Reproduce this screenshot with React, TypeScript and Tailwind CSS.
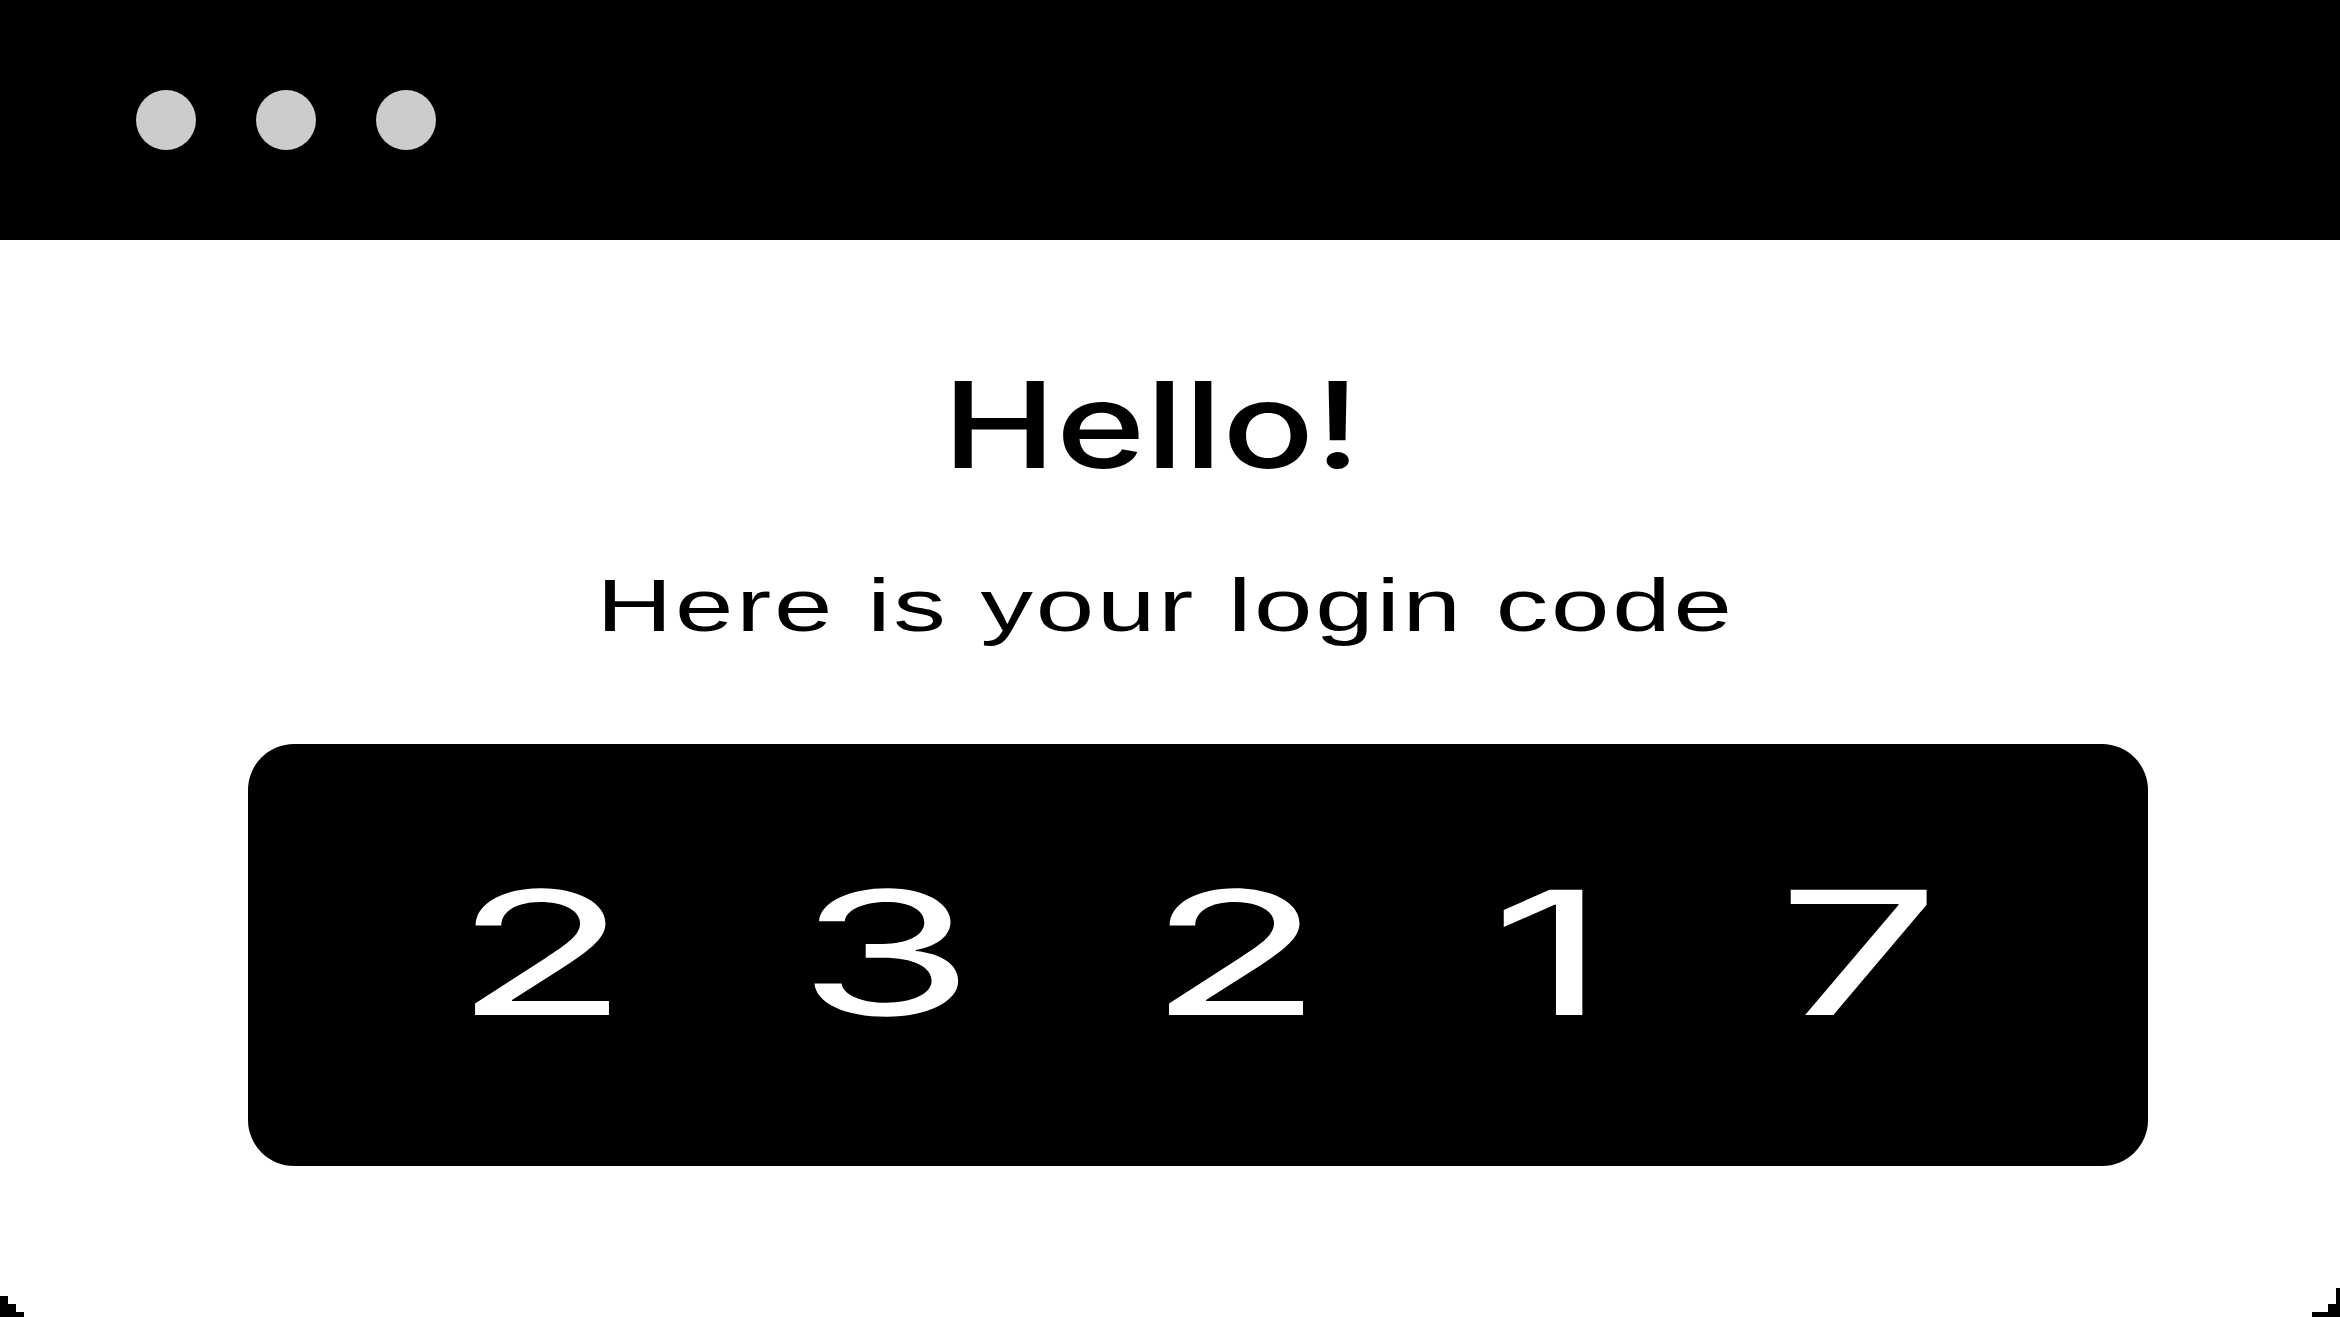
import React from 'react';

const digits = [
  { d: '2', w: 'w-[138px]', ml: 'ml-[224px]' },
  { d: '3', w: 'w-[142px]', ml: 'ml-[205px]' },
  { d: '2', w: 'w-[138px]', ml: 'ml-[209px]' },
  { d: '1', w: 'w-[75px]', ml: 'ml-[207px]' },
  { d: '7', w: 'w-[133px]', ml: 'ml-[206px]' },
];

export default function App() {
  return (
    <div className="relative h-[1317px] w-full overflow-hidden bg-white">
      {/* Window bar */}
      <header className="flex h-[240px] items-center gap-[60px] bg-black pl-[136px]">
        <span className="h-[60px] w-[60px] rounded-full bg-[#cccccc]" />
        <span className="h-[60px] w-[60px] rounded-full bg-[#cccccc]" />
        <span className="h-[60px] w-[60px] rounded-full bg-[#cccccc]" />
      </header>

      <main className="flex flex-col">
        <h1 className="mt-[125px] pr-[36px] text-center font-['Inter',sans-serif] text-[120px] font-medium leading-none text-black">
          <span className="inline-block scale-x-[1.27]">Hello!</span>
        </h1>

        <p className="mt-[83px] pr-[8px] text-center font-['Liberation_Sans',Arial,sans-serif] text-[75px] leading-none text-black">
          <span className="inline-block scale-x-[1.4] tracking-[2px]">Here is your login code</span>
        </p>

        {/* Code card */}
        <div className="ml-[248px] mt-[101px] flex h-[422px] w-[1900px] items-center rounded-[46px] bg-black pb-[6px]">
          {digits.map((item, i) => (
            <div key={i} className={`${item.ml} ${item.w} flex-none text-center`}>
              <span className="inline-block scale-x-[1.68] font-['Inter',sans-serif] text-[172px] leading-none text-white">
                {item.d}
              </span>
            </div>
          ))}
        </div>
      </main>

      {/* pixel corners */}
      <div className="absolute bottom-0 left-0 h-[21px] w-[8px] bg-black" />
      <div className="absolute bottom-0 left-[8px] h-[13px] w-[8px] bg-black" />
      <div className="absolute bottom-0 left-[16px] h-[5px] w-[8px] bg-black" />
      <div className="absolute bottom-0 right-0 h-[29px] w-[4px] bg-black" />
      <div className="absolute bottom-0 right-[4px] h-[13px] w-[8px] bg-black" />
      <div className="absolute bottom-0 right-[12px] h-[5px] w-[16px] bg-black" />
    </div>
  );
}
